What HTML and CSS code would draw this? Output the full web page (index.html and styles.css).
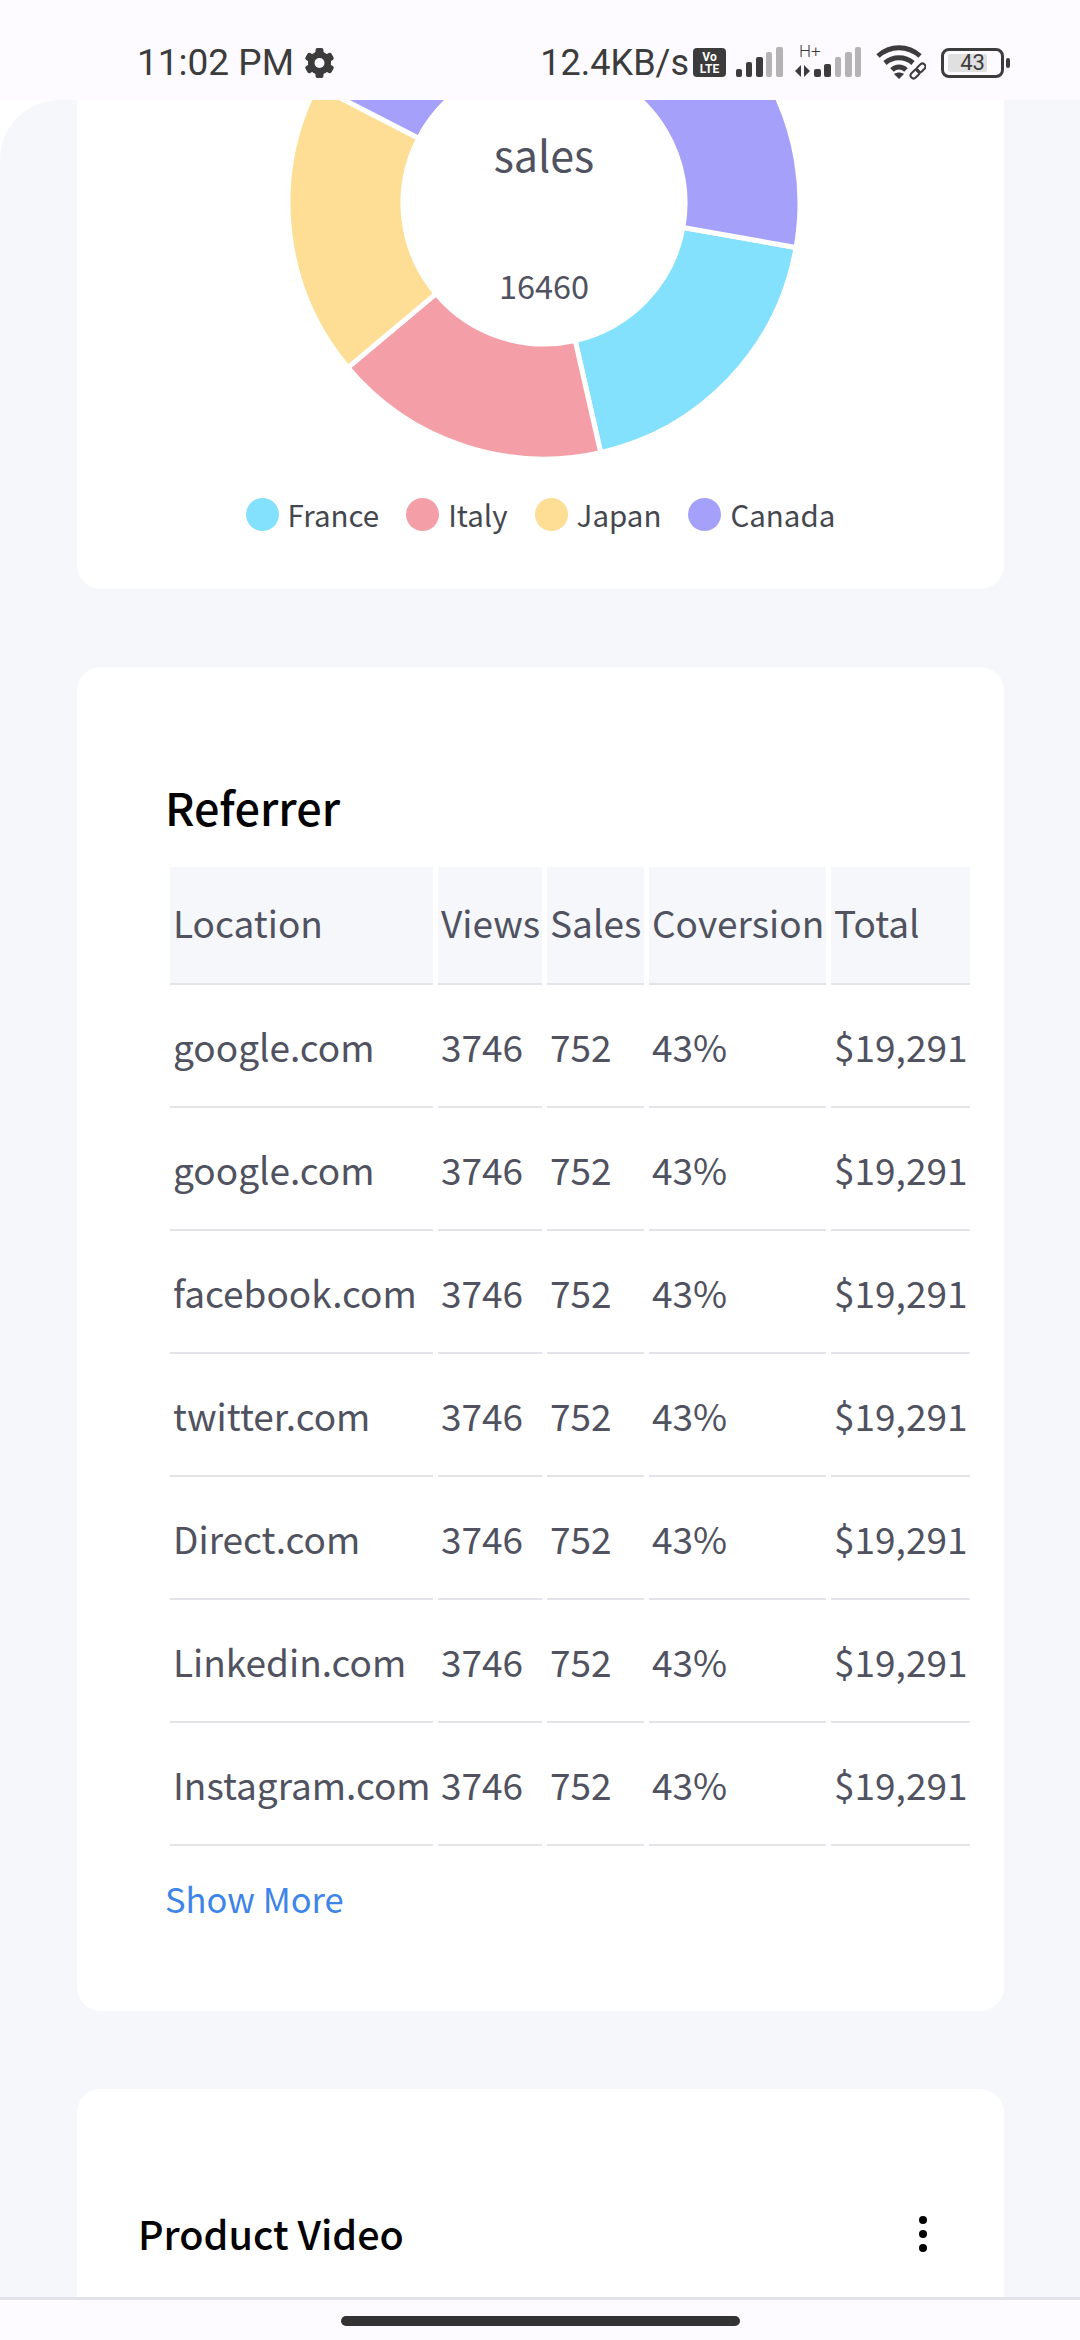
FILE: index.html
```html
<!DOCTYPE html>
<html lang="en">
<head>
    <meta charset="UTF-8">
    <meta name="viewport" content="width=device-width, initial-scale=1.0">
    <title>Dashboard</title>
    <link rel="stylesheet" href="styles.css">
</head>
<body>
    <div class="status-bar">
        <span class="status-time">11:02 PM</span>
        <svg class="icon-gear" width="31" height="30" viewBox="-15.5 -15 31 30">
            <g fill="#3c3c3c">
                <circle r="11.5"/>
                <rect x="-4" y="-15" width="8" height="30" rx="2"/>
                <rect x="-4" y="-15" width="8" height="30" rx="2" transform="rotate(60)"/>
                <rect x="-4" y="-15" width="8" height="30" rx="2" transform="rotate(120)"/>
            </g>
            <circle r="5" fill="#fdfbff"/>
        </svg>
        <div class="status-right">
            <span class="status-speed">12.4KB/s</span>
            <div class="volte"><span>Vo</span><span>LTE</span></div>
            <svg class="icon-signal" width="48" height="31" viewBox="0 0 48 31">
                <rect x="1" y="22" width="6" height="8" rx="2" fill="#3c3c3c"/>
                <rect x="11" y="15" width="6" height="15" rx="2" fill="#3c3c3c"/>
                <rect x="21" y="10" width="7" height="20" rx="2" fill="#3c3c3c"/>
                <rect x="31" y="5" width="6" height="25" rx="2" fill="#b4b4b4"/>
                <rect x="41" y="0" width="7" height="30" rx="2" fill="#b4b4b4"/>
            </svg>
            <div class="signal-two">
                <span class="signal-label">H+</span>
                <svg width="66" height="31" viewBox="0 0 66 31">
                    <path d="M0 24l6-6v12zM9 18l6 6-6 6z" fill="#3c3c3c"/>
                    <rect x="19" y="22" width="7" height="8" rx="2" fill="#3c3c3c"/>
                    <rect x="29" y="17" width="7" height="13" rx="2" fill="#3c3c3c"/>
                    <rect x="40" y="10" width="6" height="20" rx="2" fill="#b4b4b4"/>
                    <rect x="50" y="5" width="7" height="25" rx="2" fill="#b4b4b4"/>
                    <rect x="60" y="0" width="6" height="30" rx="2" fill="#b4b4b4"/>
                </svg>
            </div>
            <svg class="icon-wifi" width="50" height="36" viewBox="0 0 50 36">
                <g fill="none" stroke="#3c3c3c" stroke-width="5">
                    <path d="M2 11C14 0 32 0 44 11"/>
                    <path d="M9 18C17 11 29 11 37 18"/>
                    <path d="M16 25C20 21 26 21 30 25"/>
                </g>
                <path d="M23 34l-5-5c3-2 7-2 10 0z" fill="#3c3c3c"/>
                <g fill="none" stroke="#3c3c3c" stroke-width="2">
                    <rect x="34" y="26" width="10" height="6" rx="3" transform="rotate(-45 39 29)"/>
                    <rect x="40" y="20" width="10" height="6" rx="3" transform="rotate(-45 45 23)"/>
                </g>
            </svg>
            <div class="battery">
                <div class="battery-body">
                    <div class="battery-level"></div>
                    <span class="battery-text">43</span>
                </div>
                <div class="battery-nub"></div>
            </div>
        </div>
    </div>

    <div class="page">
        <div class="content">
            <div class="card chart-card">
                <div class="chart-wrap">
                    <svg class="donut" width="512" height="360" viewBox="-256 -103 512 360">
                        <path d="M138.9 24.5L252.1 44.5A256 256 0 0 1 56.7 249.6L31.2 137.5A141 141 0 0 0 138.9 24.5Z" fill="#84e1fe" stroke="#fff" stroke-width="5"/>
                        <path d="M31.2 137.5L56.7 249.6A256 256 0 0 1 -196.1 164.6L-108 90.6A141 141 0 0 0 31.2 137.5Z" fill="#f49fa8" stroke="#fff" stroke-width="5"/>
                        <path d="M-108 90.6L-196.1 164.6A256 256 0 0 1 -227.5 -117.4L-125.3 -64.7A141 141 0 0 0 -108 90.6Z" fill="#fedd94" stroke="#fff" stroke-width="5"/>
                        <path d="M-125.3 -64.7L-227.5 -117.4A256 256 0 0 1 252.1 44.5L138.9 24.5A141 141 0 0 0 -125.3 -64.7Z" fill="#a5a1fa" stroke="#fff" stroke-width="5"/>
                        <text class="donut-title" x="0" y="-31" text-anchor="middle">sales</text>
                        <text class="donut-value" x="0" y="96" text-anchor="middle">16460</text>
                    </svg>
                </div>
                <div class="legend">
                    <div class="legend-item"><span class="dot dot-france"></span>France</div>
                    <div class="legend-item"><span class="dot dot-italy"></span>Italy</div>
                    <div class="legend-item"><span class="dot dot-japan"></span>Japan</div>
                    <div class="legend-item"><span class="dot dot-canada"></span>Canada</div>
                </div>
            </div>

            <div class="card referrer-card">
                <h2 class="referrer-title">Referrer</h2>
                <table class="referrer-table">
                    <colgroup>
                        <col class="col-location">
                        <col class="col-views">
                        <col class="col-sales">
                        <col class="col-conversion">
                        <col class="col-total">
                    </colgroup>
                    <thead>
                        <tr>
                            <th>Location</th>
                            <th>Views</th>
                            <th>Sales</th>
                            <th>Coversion</th>
                            <th>Total</th>
                        </tr>
                    </thead>
                    <tbody>
                        <tr><td>google.com</td><td>3746</td><td>752</td><td>43%</td><td>$19,291</td></tr>
                        <tr><td>google.com</td><td>3746</td><td>752</td><td>43%</td><td>$19,291</td></tr>
                        <tr><td>facebook.com</td><td>3746</td><td>752</td><td>43%</td><td>$19,291</td></tr>
                        <tr><td>twitter.com</td><td>3746</td><td>752</td><td>43%</td><td>$19,291</td></tr>
                        <tr><td>Direct.com</td><td>3746</td><td>752</td><td>43%</td><td>$19,291</td></tr>
                        <tr><td>Linkedin.com</td><td>3746</td><td>752</td><td>43%</td><td>$19,291</td></tr>
                        <tr><td>Instagram.com</td><td>3746</td><td>752</td><td>43%</td><td>$19,291</td></tr>
                    </tbody>
                </table>
                <a class="show-more" href="#">Show More</a>
            </div>

            <div class="card video-card">
                <h2 class="video-title">Product Video</h2>
                <div class="more-dots"><span></span><span></span><span></span></div>
            </div>
        </div>
    </div>

    <div class="nav-bar">
        <div class="nav-pill"></div>
    </div>
</body>
</html>
```

FILE: styles.css
```css
* {
    box-sizing: border-box;
}
body {
    display: flex;
    flex-direction: column;
    width: 1080px;
    height: 2340px;
    margin: 0;
    overflow: hidden;
    font-family: "Noto Sans CJK SC", "Noto Sans", sans-serif;
    background-color: #fff;
}

/* status bar */
.status-bar {
    display: flex;
    align-items: center;
    height: 100px;
    padding: 25px 70px 0 137px;
    flex-shrink: 0;
    background-color: #fdfbff;
    color: #3c3c3c;
    font-family: Roboto, sans-serif;
}
.status-time {
    font-size: 37px;
}
.icon-gear {
    margin-left: 10px;
}
.status-right {
    display: flex;
    align-items: center;
    margin-left: auto;
}
.status-speed {
    font-size: 36px;
}
.volte {
    display: flex;
    flex-direction: column;
    align-items: center;
    justify-content: center;
    width: 33px;
    height: 29px;
    margin-left: 4px;
    border-radius: 4px;
    background-color: #3c3c3c;
    color: #fff;
    font-size: 12px;
    font-weight: 700;
    line-height: 12px;
}
.icon-signal {
    margin-left: 9px;
}
.signal-two {
    position: relative;
    margin-left: 12px;
    height: 31px;
}
.signal-label {
    position: absolute;
    left: 4px;
    top: -3px;
    font-size: 17px;
    font-weight: 300;
    line-height: 14px;
}
.icon-wifi {
    margin-left: 15px;
}
.battery {
    display: flex;
    align-items: center;
    margin-left: 15px;
}
.battery-body {
    position: relative;
    display: flex;
    align-items: center;
    justify-content: center;
    width: 63px;
    height: 30px;
    border: 3px solid #3c3c3c;
    border-radius: 8px;
}
.battery-level {
    position: absolute;
    left: 4px;
    top: 3px;
    bottom: 3px;
    width: 39px;
    border-radius: 2px;
    background-color: #e0e0e0;
}
.battery-text {
    position: relative;
    font-size: 22px;
}
.battery-nub {
    width: 4px;
    height: 10px;
    margin-left: 2px;
    border-radius: 2px;
    background-color: #3c3c3c;
}

/* page */
.page {
    flex: 1;
    min-height: 0;
    background-color: #fff;
}
.content {
    display: flex;
    flex-direction: column;
    gap: 78px;
    height: 100%;
    padding: 0 76px 0 77px;
    overflow: hidden;
    border-top-left-radius: 60px;
    background-color: #f5f7fb;
}
.card {
    flex-shrink: 0;
    background-color: #fff;
    border-radius: 24px;
}

/* donut chart */
.chart-card {
    height: 489px;
    border-radius: 0 0 24px 24px;
}
.chart-wrap {
    display: flex;
    justify-content: center;
    padding-left: 7px;
    height: 360px;
}
.donut-title {
    font-size: 43px;
    fill: #50525f;
}
.donut-value {
    font-size: 32.5px;
    fill: #50525f;
}
.legend {
    display: flex;
    justify-content: center;
    gap: 27px;
    margin-top: 34px;
}
.legend-item {
    display: flex;
    align-items: center;
    gap: 9px;
    font-size: 29.5px;
    line-height: 40px;
    color: #45474f;
}
.dot {
    width: 33px;
    height: 33px;
    border-radius: 50%;
}
.dot-france { background-color: #84e1fe; }
.dot-italy { background-color: #f49fa8; }
.dot-japan { background-color: #fedd94; }
.dot-canada { background-color: #a5a1fa; }

/* referrer table */
.referrer-card {
    height: 1344px;
    padding: 111px 0 0 88px;
}
.referrer-title {
    margin: 0;
    font-size: 45px;
    font-weight: 500;
    line-height: 58px;
    color: #000;
}
.referrer-table {
    width: 810px;
    margin: 31px 0 0 0;
    table-layout: fixed;
    border-collapse: separate;
    border-spacing: 5px 0;
    font-size: 37px;
    color: #50525f;
}
.col-location { width: 263px; }
.col-views { width: 104px; }
.col-sales { width: 97px; }
.col-conversion { width: 177px; }
.col-total { width: 139px; }
.referrer-table th,
.referrer-table td {
    padding: 0 3px;
    font-weight: 400;
    text-align: left;
    white-space: nowrap;
    border-bottom: 2px solid #e3e3ea;
}
.referrer-table th {
    height: 118px;
    padding-bottom: 7px;
    background-color: #f5f7fb;
}
.referrer-table td {
    height: 123px;
}
.show-more {
    display: block;
    margin-top: 29px;
    font-size: 34.5px;
    line-height: 46px;
    color: #3d85e8;
    text-decoration: none;
}

/* product video */
.video-card {
    display: flex;
    align-items: flex-start;
    justify-content: space-between;
    height: 400px;
    padding: 115px 77px 0 61px;
}
.video-title {
    margin: 0;
    font-size: 39.5px;
    font-weight: 500;
    line-height: 58px;
    color: #000;
}
.more-dots {
    display: flex;
    flex-direction: column;
    gap: 6px;
    margin-top: 12px;
}
.more-dots span {
    width: 8px;
    height: 8px;
    border-radius: 50%;
    background-color: #000;
}

/* nav bar */
.nav-bar {
    display: flex;
    justify-content: center;
    height: 43px;
    flex-shrink: 0;
    padding-top: 16px;
    border-top: 3px solid #e2e2ea;
    background-color: #fdfbff;
}
.nav-pill {
    width: 399px;
    height: 10px;
    border-radius: 5px;
    background-color: #333;
}
```
